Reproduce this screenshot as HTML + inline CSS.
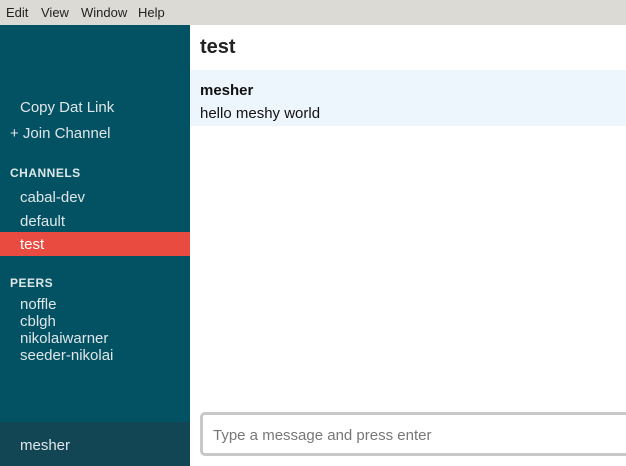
<!DOCTYPE html>
<html><head><style>
*{margin:0;padding:0;box-sizing:border-box}
body{width:626px;height:466px;overflow:hidden;font-family:"Liberation Sans",sans-serif;position:relative;background:#fff}
.menu{position:absolute;left:0;top:0;width:626px;height:25px;background:#dcdad5;font-size:13px;color:#222}
.menu span{position:absolute;top:5px}
.side{position:absolute;left:0;top:25px;width:190px;height:441px;background:#025263;color:#e0e6e8}
.t{position:absolute;font-size:15px;white-space:nowrap}
.h{position:absolute;font-size:12px;font-weight:bold;letter-spacing:.5px;left:10px;color:#dfe6e8}
.sel{position:absolute;left:0;top:207px;width:190px;height:24px;background:#e94b40}
.foot{position:absolute;left:0;top:397px;width:190px;height:44px;background:#134654}
.main{position:absolute;left:190px;top:25px;width:436px;height:441px}
</style></head><body>
<div class="menu"><span style="left:6px">Edit</span><span style="left:41px">View</span><span style="left:81px">Window</span><span style="left:138px">Help</span></div>
<div class="side">
<div class="t" style="left:20px;top:74px">Copy Dat Link</div>
<div class="t" style="left:10px;top:100px">+ Join Channel</div>
<div class="h" style="top:141px">CHANNELS</div>
<div class="t" style="left:20px;top:164px">cabal-dev</div>
<div class="t" style="left:20px;top:188px">default</div>
<div class="sel"></div>
<div class="t" style="left:20px;top:211px;color:#fff">test</div>
<div class="h" style="top:251px">PEERS</div>
<div class="t" style="left:20px;top:271px">noffle</div>
<div class="t" style="left:20px;top:288px">cblgh</div>
<div class="t" style="left:20px;top:305px">nikolaiwarner</div>
<div class="t" style="left:20px;top:322px">seeder-nikolai</div>
<div class="foot"><div class="t" style="left:20px;top:15px">mesher</div></div>
</div>
<div class="main">
<div style="position:absolute;left:10px;top:11px;font-size:20px;font-weight:bold;color:#222">test</div>
<div style="position:absolute;left:0;top:45px;width:436px;height:56px;background:#eef6fd"></div>
<div style="position:absolute;left:10px;top:57px;font-size:15px;font-weight:bold;color:#111">mesher</div>
<div style="position:absolute;left:10px;top:80px;font-size:15px;color:#111">hello meshy world</div>
<div style="position:absolute;left:10px;top:387px;width:440px;height:44px;border:3px solid #c8c8c8;border-radius:5px;background:#fff"><div style="position:absolute;left:10px;top:12px;font-size:15px;color:#777">Type a message and press enter</div></div>
</div>
</body></html>
